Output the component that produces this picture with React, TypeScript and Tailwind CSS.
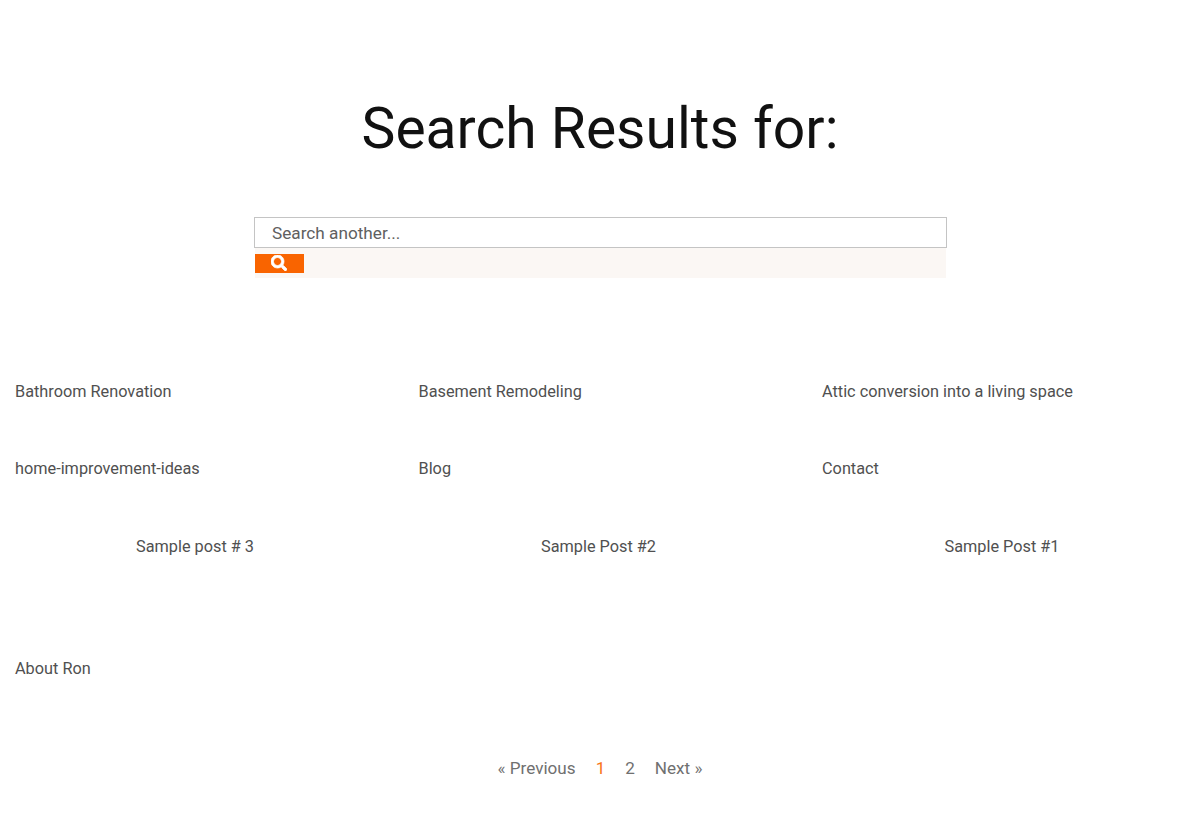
import React from 'react';
import { FaSearch } from 'react-icons/fa';

const row1 = ['Bathroom Renovation', 'Basement Remodeling', 'Attic conversion into a living space'];
const row2 = ['home-improvement-ideas', 'Blog', 'Contact'];
const row3 = ['Sample post # 3', 'Sample Post #2', 'Sample Post #1'];

const App = () => {
  return (
    <div className="min-h-[818px] bg-white font-['Roboto',sans-serif] text-[16.3px] text-[#505050]">
      <h1 className="pt-[93px] text-center text-[57px] leading-[72px] font-normal text-[#111111]">Search Results for:</h1>

      <form className="mx-auto mt-[52px] w-[693px]">
        <input
          type="text"
          placeholder="Search another..."
          className="block h-[31px] w-full border border-[#c4c4c4] bg-white pr-[17px] pl-[17.5px] text-[17.2px] text-[#444444] placeholder:text-[#606060] outline-none"
        />
        <div className="mx-px h-[29.5px] bg-[#fbf7f4] pt-[6px]">
          <button type="button" className="flex h-[19px] w-[49px] items-center justify-center bg-[#f96400] text-white">
            <FaSearch className="mb-[1px] h-[16px] w-[16px] stroke-white stroke-[24]" />
          </button>
        </div>
      </form>

      <div className="mt-[102px] grid grid-cols-[repeat(3,360px)] gap-x-[43.5px] pl-[15px] leading-[24px]">
        {row1.map((t) => (
          <a key={t} className="block">{t}</a>
        ))}
        {row2.map((t) => (
          <a key={t} className="mt-[53px] block">{t}</a>
        ))}
        {row3.map((t) => (
          <a key={t} className="mt-[54px] block text-center">{t}</a>
        ))}
        <a className="mt-[98px] block">About Ron</a>
      </div>

      <nav className="mt-[75.5px] flex justify-center gap-[20px] text-[17.1px] leading-[24px] text-[#707070]">
        <a>« Previous</a>
        <span className="text-[#f97316]">1</span>
        <a>2</a>
        <a>Next »</a>
      </nav>
    </div>
  );
};

export default App;
